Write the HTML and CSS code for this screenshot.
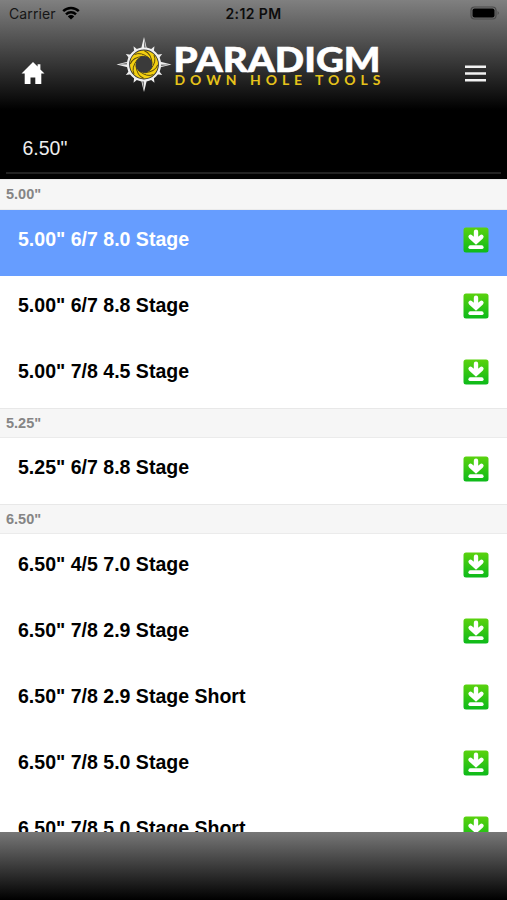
FILE: index.html
```html
<!DOCTYPE html>
<html lang="en">

<head>
    <meta charset="UTF-8">
    <meta name="viewport" content="width=device-width, initial-scale=1.0">
    <title>Paradigm Down Hole Tools</title>
    <link rel="stylesheet" href="styles.css">
</head>

<body>
    <!-- shared icons -->
    <svg class="sprite" width="0" height="0">
        <defs>
            <linearGradient id="green" x1="0" y1="0" x2="0" y2="1">
                <stop offset="0" stop-color="#5ad20e" />
                <stop offset="1" stop-color="#0cba1a" />
            </linearGradient>
            <symbol id="download" viewBox="0 0 26 26">
                <rect x="0.5" y="0.5" width="25" height="25" rx="2.5" fill="url(#green)" />
                <path d="M13 4.8v8M7.6 9.8l5.4 4.9 5.4-4.9" fill="none" stroke="#fff" stroke-width="4.4" stroke-linecap="round" />
                <path d="M7.3 20.2h11.4" stroke="#fff" stroke-width="3.8" stroke-linecap="round" />
            </symbol>
        </defs>
    </svg>

    <div class="header">
        <div class="status">
            <div class="status-left">
                <span>Carrier</span>
                <svg class="wifi" viewBox="0 0 18 14" width="18" height="14">
                    <path d="M1.2 5.2a11.2 11.2 0 0 1 15.6 0M4 8.3a7.2 7.2 0 0 1 10 0" fill="none" stroke="#000" stroke-width="2.5" />
                    <path d="M5.8 10.4a4.6 4.6 0 0 1 6.4 0L9 13.6z" />
                </svg>
            </div>
            <div class="status-time">2:12 PM</div>
            <div class="status-right">
                <svg viewBox="0 0 30 14" width="30" height="14">
                    <rect x="1" y="1" width="25" height="12" rx="3.5" fill="none" stroke="#4a4a4a" stroke-width="1.2" />
                    <rect x="2.5" y="2.5" width="22" height="9" rx="2" />
                    <path d="M27.6 5q2.4 2 0 4z" fill="#4a4a4a" />
                </svg>
            </div>
        </div>
        <div class="nav">
            <a href="javascript:;" class="nav-home">
                <svg viewBox="0 0 24 22" width="24" height="22">
                    <path d="M12 0L0.5 11.6h3.2V22h5.8v-6.4h4.8V22h6V11.6h3.2L19.4 7.4V2.2h-2.8v2.4z" fill="#fff" />
                </svg>
            </a>
            <svg class="logo" viewBox="0 0 266 58" width="266" height="58">
                <defs>
                    <g id="ray">
                        <path d="M28 1l-3.2 13h6.4z" fill="#eee" />
                        <path d="M28 3v11h2.3z" fill="#777" />
                    </g>
                    <path id="tick" d="M28 7.5l-2 5h4z" fill="#eee" />
                    <path id="blade" d="M18.5 18.5Q25 15.5 33 22" fill="none" stroke="#5a4c10" stroke-width="1" />
                </defs>
                <use href="#ray" />
                <use href="#ray" transform="rotate(90 28 28.5)" />
                <use href="#ray" transform="rotate(180 28 28.5)" />
                <use href="#ray" transform="rotate(270 28 28.5)" />
                <use href="#tick" transform="rotate(30 28 28.5)" />
                <use href="#tick" transform="rotate(60 28 28.5)" />
                <use href="#tick" transform="rotate(120 28 28.5)" />
                <use href="#tick" transform="rotate(150 28 28.5)" />
                <use href="#tick" transform="rotate(210 28 28.5)" />
                <use href="#tick" transform="rotate(240 28 28.5)" />
                <use href="#tick" transform="rotate(300 28 28.5)" />
                <use href="#tick" transform="rotate(330 28 28.5)" />
                <circle cx="28" cy="28.5" r="16" fill="#333" stroke="#f0f0f0" stroke-width="2.2" />
                <circle cx="28" cy="28.5" r="14" fill="#f4d010" />
                <use href="#blade" />
                <use href="#blade" transform="rotate(45 28 28.5)" />
                <use href="#blade" transform="rotate(90 28 28.5)" />
                <use href="#blade" transform="rotate(135 28 28.5)" />
                <use href="#blade" transform="rotate(180 28 28.5)" />
                <use href="#blade" transform="rotate(225 28 28.5)" />
                <use href="#blade" transform="rotate(270 28 28.5)" />
                <use href="#blade" transform="rotate(315 28 28.5)" />
                <circle cx="28" cy="28.5" r="8.4" fill="#3a3a3a" />
                <text class="logo-name" x="57.5" y="35.5" textLength="207" lengthAdjust="spacingAndGlyphs">PARADIGM</text>
                <text class="logo-sub" x="58.5" y="49" textLength="206">DOWN HOLE TOOLS</text>
            </svg>
            <a href="javascript:;" class="nav-menu">
                <svg viewBox="0 0 21 17" width="21" height="17">
                    <path d="M0 1.8h21M0 8.5h21M0 15.2h21" stroke="#f2f2f2" stroke-width="2.6" />
                </svg>
            </a>
        </div>
    </div>

    <div class="filter">
        <div class="filter-value">6.50"</div>
    </div>

    <div class="list">
        <div class="list-title">5.00"</div>
        <div class="list-item active">5.00" 6/7 8.0 Stage<svg class="icon"><use href="#download" /></svg></div>
        <div class="list-item">5.00" 6/7 8.8 Stage<svg class="icon"><use href="#download" /></svg></div>
        <div class="list-item">5.00" 7/8 4.5 Stage<svg class="icon"><use href="#download" /></svg></div>
        <div class="list-title">5.25"</div>
        <div class="list-item">5.25" 6/7 8.8 Stage<svg class="icon"><use href="#download" /></svg></div>
        <div class="list-title">6.50"</div>
        <div class="list-item">6.50" 4/5 7.0 Stage<svg class="icon"><use href="#download" /></svg></div>
        <div class="list-item">6.50" 7/8 2.9 Stage<svg class="icon"><use href="#download" /></svg></div>
        <div class="list-item">6.50" 7/8 2.9 Stage Short<svg class="icon"><use href="#download" /></svg></div>
        <div class="list-item">6.50" 7/8 5.0 Stage<svg class="icon"><use href="#download" /></svg></div>
        <div class="list-item">6.50" 7/8 5.0 Stage Short<svg class="icon"><use href="#download" /></svg></div>
    </div>

    <div class="footer"></div>
</body>

</html>
```
FILE: styles.css
```css
* {
    margin: 0;
    padding: 0;
    box-sizing: border-box;
}

body {
    display: flex;
    flex-direction: column;
    height: 900px;
    overflow: hidden;
    background-color: #fff;
    font-family: "Liberation Sans", Arial, sans-serif;
}

a {
    text-decoration: none;
}

svg {
    display: block;
}

.sprite {
    position: absolute;
}

.header {
    flex: none;
    height: 110px;
    background: linear-gradient(#808080, #000);
}

/* status bar */
.status {
    display: grid;
    grid-template-columns: 1fr auto 1fr;
    align-items: center;
    height: 28px;
    padding: 0 7px 0 9px;
    font-family: Inter, sans-serif;
    font-size: 14px;
    color: #161616;
}

.status-left {
    display: flex;
    align-items: center;
    gap: 6px;
    margin-bottom: 1px;
    letter-spacing: 0.1px;
}

.wifi {
    margin-bottom: 2px;
}

.status-time {
    margin-right: 2px;
    margin-bottom: 1px;
    font-size: 14px;
    font-weight: 600;
    letter-spacing: 0.4px;
    color: #0c0c0c;
}

.status-right {
    display: flex;
    justify-content: flex-end;
    margin-bottom: 2px;
}

/* nav */
.nav {
    display: flex;
    padding: 8px 21px 0;
}

.nav-home {
    margin-top: 26px;
}

.logo {
    margin-left: 70.5px;
}

.logo-name {
    font-family: Lato, sans-serif;
    font-size: 34.5px;
    font-weight: 900;
    fill: #fff;
    stroke: #fff;
    stroke-width: 0.6px;
}

.logo-sub {
    font-family: Lato, sans-serif;
    font-size: 14px;
    font-weight: 700;
    fill: #e6c31a;
}

.nav-menu {
    margin-top: 28.5px;
    margin-left: auto;
}

/* selected size */
.filter {
    flex: none;
    height: 69.3px;
    padding: 0 6px;
    background-color: #000;
}

.filter-value {
    height: 63.5px;
    padding: 27px 0 0 16.5px;
    border-bottom: 2px solid #222;
    line-height: 22px;
    font-size: 19.5px;
    color: #eee;
}

/* list */
.list {
    flex: 1;
    min-height: 0;
    overflow: hidden;
}

.list-title {
    height: 30.4px;
    padding-left: 6px;
    border-top: 1px solid #e8e8e8;
    border-bottom: 1px solid #ebebeb;
    background-color: #f6f6f6;
    line-height: 28px;
    font-size: 14.5px;
    font-weight: bold;
    color: #858585;
}

.list-item {
    display: flex;
    justify-content: space-between;
    height: 66px;
    padding: 18.2px 18px 0;
    line-height: 22px;
    font-size: 19.55px;
    font-weight: bold;
    color: #000;
}

.list-item.active {
    background-color: #669dff;
    color: #fff;
}

.icon {
    width: 26px;
    height: 26px;
    margin-top: -0.6px;
}

.footer {
    flex: none;
    height: 68.3px;
    background: linear-gradient(#777, #000);
}
```
